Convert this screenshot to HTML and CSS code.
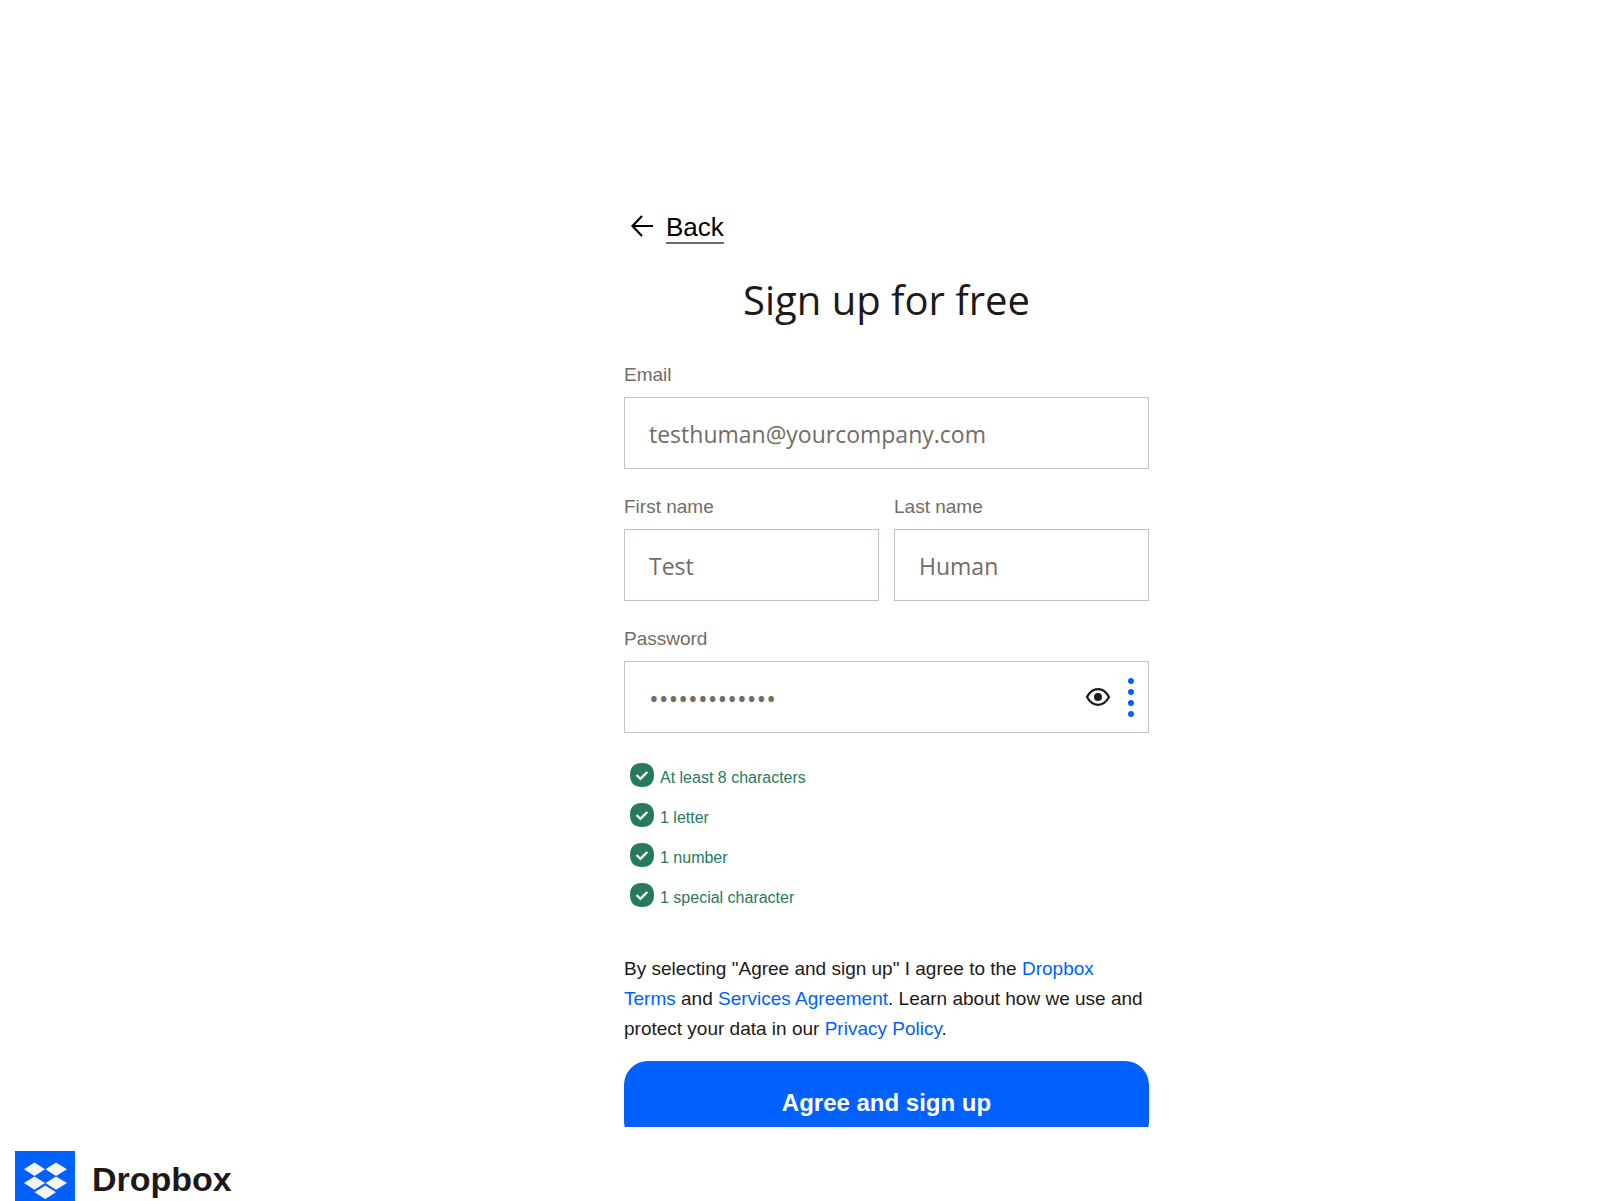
FILE: index.html
```html
<!DOCTYPE html>
<html lang="en">
<head>
  <meta charset="UTF-8" />
  <title>Sign up - Dropbox</title>
  <meta name="viewport" content="width=device-width, initial-scale=1" />
  <link rel="stylesheet" href="styles.css">
</head>
<body>
  <main class="page">
    <form class="signup">
      <a class="back" href="#">
        <svg class="back-arrow" viewBox="0 0 24 32" aria-hidden="true">
          <path d="M23 14H3M12 4L2.500 14L12 24" fill="none" stroke="currentColor" stroke-width="2.200" />
        </svg>
        <span class="back-text">Back</span>
      </a>

      <h1>Sign up for free</h1>

      <div class="field">
        <label for="email">Email</label>
        <input type="email" id="email" name="email" value="testhuman@yourcompany.com" />
      </div>

      <div class="names">
        <div class="field">
          <label for="firstName">First name</label>
          <input type="text" id="firstName" name="firstName" value="Test" />
        </div>
        <div class="field">
          <label for="lastName">Last name</label>
          <input type="text" id="lastName" name="lastName" value="Human" />
        </div>
      </div>

      <div class="field">
        <label for="password">Password</label>
        <div class="password-box">
          <input type="password" id="password" name="password" value="testhuman123!" />
          <button type="button" class="show-password" aria-label="Show password">
            <svg viewBox="0 0 26 20" aria-hidden="true">
              <path d="M2 10C5 4.500 8.500 2.200 13 2.200S21 4.500 24 10C21 15.500 17.500 17.800 13 17.800S5 15.500 2 10Z" fill="none" stroke="currentColor" stroke-width="2.200" />
              <circle cx="13" cy="10" r="4" fill="currentColor" />
            </svg>
          </button>
          <div class="strength">
            <span></span>
            <span></span>
            <span></span>
            <span></span>
          </div>
        </div>
      </div>

      <ul class="rules">
        <li>
          <svg viewBox="0 0 24 24" aria-hidden="true"><path d="M12 0C20 0 24 4 24 12S20 24 12 24S0 20 0 12S4 0 12 0Z" fill="currentColor" /><path d="M6.500 12L10.400 15.800L17.300 9" fill="none" stroke="#fff" stroke-width="2.400" /></svg>
          At least 8 characters
        </li>
        <li>
          <svg viewBox="0 0 24 24" aria-hidden="true"><path d="M12 0C20 0 24 4 24 12S20 24 12 24S0 20 0 12S4 0 12 0Z" fill="currentColor" /><path d="M6.500 12L10.400 15.800L17.300 9" fill="none" stroke="#fff" stroke-width="2.400" /></svg>
          1 letter
        </li>
        <li>
          <svg viewBox="0 0 24 24" aria-hidden="true"><path d="M12 0C20 0 24 4 24 12S20 24 12 24S0 20 0 12S4 0 12 0Z" fill="currentColor" /><path d="M6.500 12L10.400 15.800L17.300 9" fill="none" stroke="#fff" stroke-width="2.400" /></svg>
          1 number
        </li>
        <li>
          <svg viewBox="0 0 24 24" aria-hidden="true"><path d="M12 0C20 0 24 4 24 12S20 24 12 24S0 20 0 12S4 0 12 0Z" fill="currentColor" /><path d="M6.500 12L10.400 15.800L17.300 9" fill="none" stroke="#fff" stroke-width="2.400" /></svg>
          1 special character
        </li>
      </ul>

      <p class="terms">By selecting "Agree and sign up" I agree to the <a href="#">Dropbox Terms</a> and <a href="#">Services Agreement</a>. Learn about how we use and protect your data in our <a href="#">Privacy Policy</a>.</p>

      <button type="submit" class="submit">Agree and sign up</button>
    </form>
  </main>

  <footer class="footer">
    <a class="brand" href="#">
      <svg class="brand-logo" viewBox="0 0 60 60" aria-hidden="true">
        <rect width="60" height="60" fill="#0061fe" />
        <path d="M19.500 11.500L30 18.300L19.500 25L9 18.300ZM41 11.500L52 18.300L41 25L30.500 18.300ZM19.500 25.500L30 32L19.500 38.800L9 32ZM41 25.500L52 32L41 38.800L30.500 32ZM30.300 34.500L41 41.300L30.300 48L19.500 41.300Z" fill="#f7f5f2" />
      </svg>
      <span>Dropbox</span>
    </a>
  </footer>
</body>
</html>
```

FILE: styles.css
```css
* {
  box-sizing: border-box;
}

body {
  margin: 0;
  height: 100vh;
  display: flex;
  flex-direction: column;
  overflow: hidden;
  background-color: #fff;
  color: #1e1919;
  font-family: "Liberation Sans", Arial, sans-serif;
  font-size: 19px;
}

a {
  color: #0061fe;
  text-decoration: none;
}

.page {
  flex: 1;
  min-height: 0;
  overflow: hidden;
  padding: 212px 0 0 155px;
}

.signup {
  width: 100%;
  max-width: 525px;
  margin: 0 auto;
}

.back {
  display: inline-flex;
  gap: 12px;
  padding-left: 6px;
  color: #000;
  font-size: 26px;
  line-height: 30px;
  vertical-align: top;
}

.back-arrow {
  width: 24px;
  height: 32px;
}

.back-text {
  border-bottom: 2px solid #736c64;
}

h1 {
  margin: 32px 0 39px;
  font-family: "Open Sans", sans-serif;
  font-size: 40px;
  font-weight: 400;
  line-height: 48px;
  text-align: center;
}

.field {
  margin-bottom: 26px;
}

label {
  display: block;
  margin-bottom: 10px;
  line-height: 24px;
  color: #736c64;
}

input {
  display: block;
  width: 100%;
  height: 72px;
  padding: 2px 24px 0;
  border: 1px solid #c8c2ba;
  border-radius: 0;
  background-color: #fff;
  color: #736c64;
  font-family: "Open Sans", sans-serif;
  font-size: 23px;
}

input:focus {
  border-color: #0061fe;
  outline: none;
}

.names {
  display: grid;
  grid-template-columns: 1fr 1fr;
  gap: 15px;
}

.password-box {
  display: flex;
  align-items: center;
  padding-right: 14px;
  border: 1px solid #c8c2ba;
}

.password-box input {
  flex: 1;
  min-width: 0;
  height: 70px;
  border: none;
  font-size: 26px;
}

.show-password {
  width: 26px;
  height: 20px;
  margin-right: 17px;
  padding: 0;
  border: none;
  background: none;
  color: #1e1919;
  cursor: pointer;
}

.show-password svg {
  display: block;
}

.strength {
  display: flex;
  flex-direction: column;
  gap: 5px;
}

.strength span {
  width: 6px;
  height: 6px;
  border-radius: 50%;
  background-color: #0061fe;
}

.rules {
  display: grid;
  gap: 10px;
  margin: 30px 0 41px;
  padding: 0 0 0 6px;
  list-style: none;
  color: #277a5e;
  font-size: 16px;
  line-height: 30px;
}

.rules li {
  display: flex;
  gap: 6px;
}

.rules svg {
  width: 24px;
  height: 24px;
}

.terms {
  margin: 0 0 17px;
  line-height: 30px;
}

.submit {
  width: 100%;
  height: 84px;
  border: none;
  border-radius: 24px;
  background-color: #0061fe;
  color: #fff;
  font-family: inherit;
  font-size: 24px;
  font-weight: 700;
  cursor: pointer;
}

.footer {
  flex: none;
  height: 74px;
  padding: 24px 15px 0;
  overflow: hidden;
}

.brand {
  display: inline-flex;
  gap: 17px;
  color: #1e1919;
  font-size: 34px;
  font-weight: 700;
  line-height: 56px;
}

.brand-logo {
  width: 60px;
  height: 60px;
}
```
